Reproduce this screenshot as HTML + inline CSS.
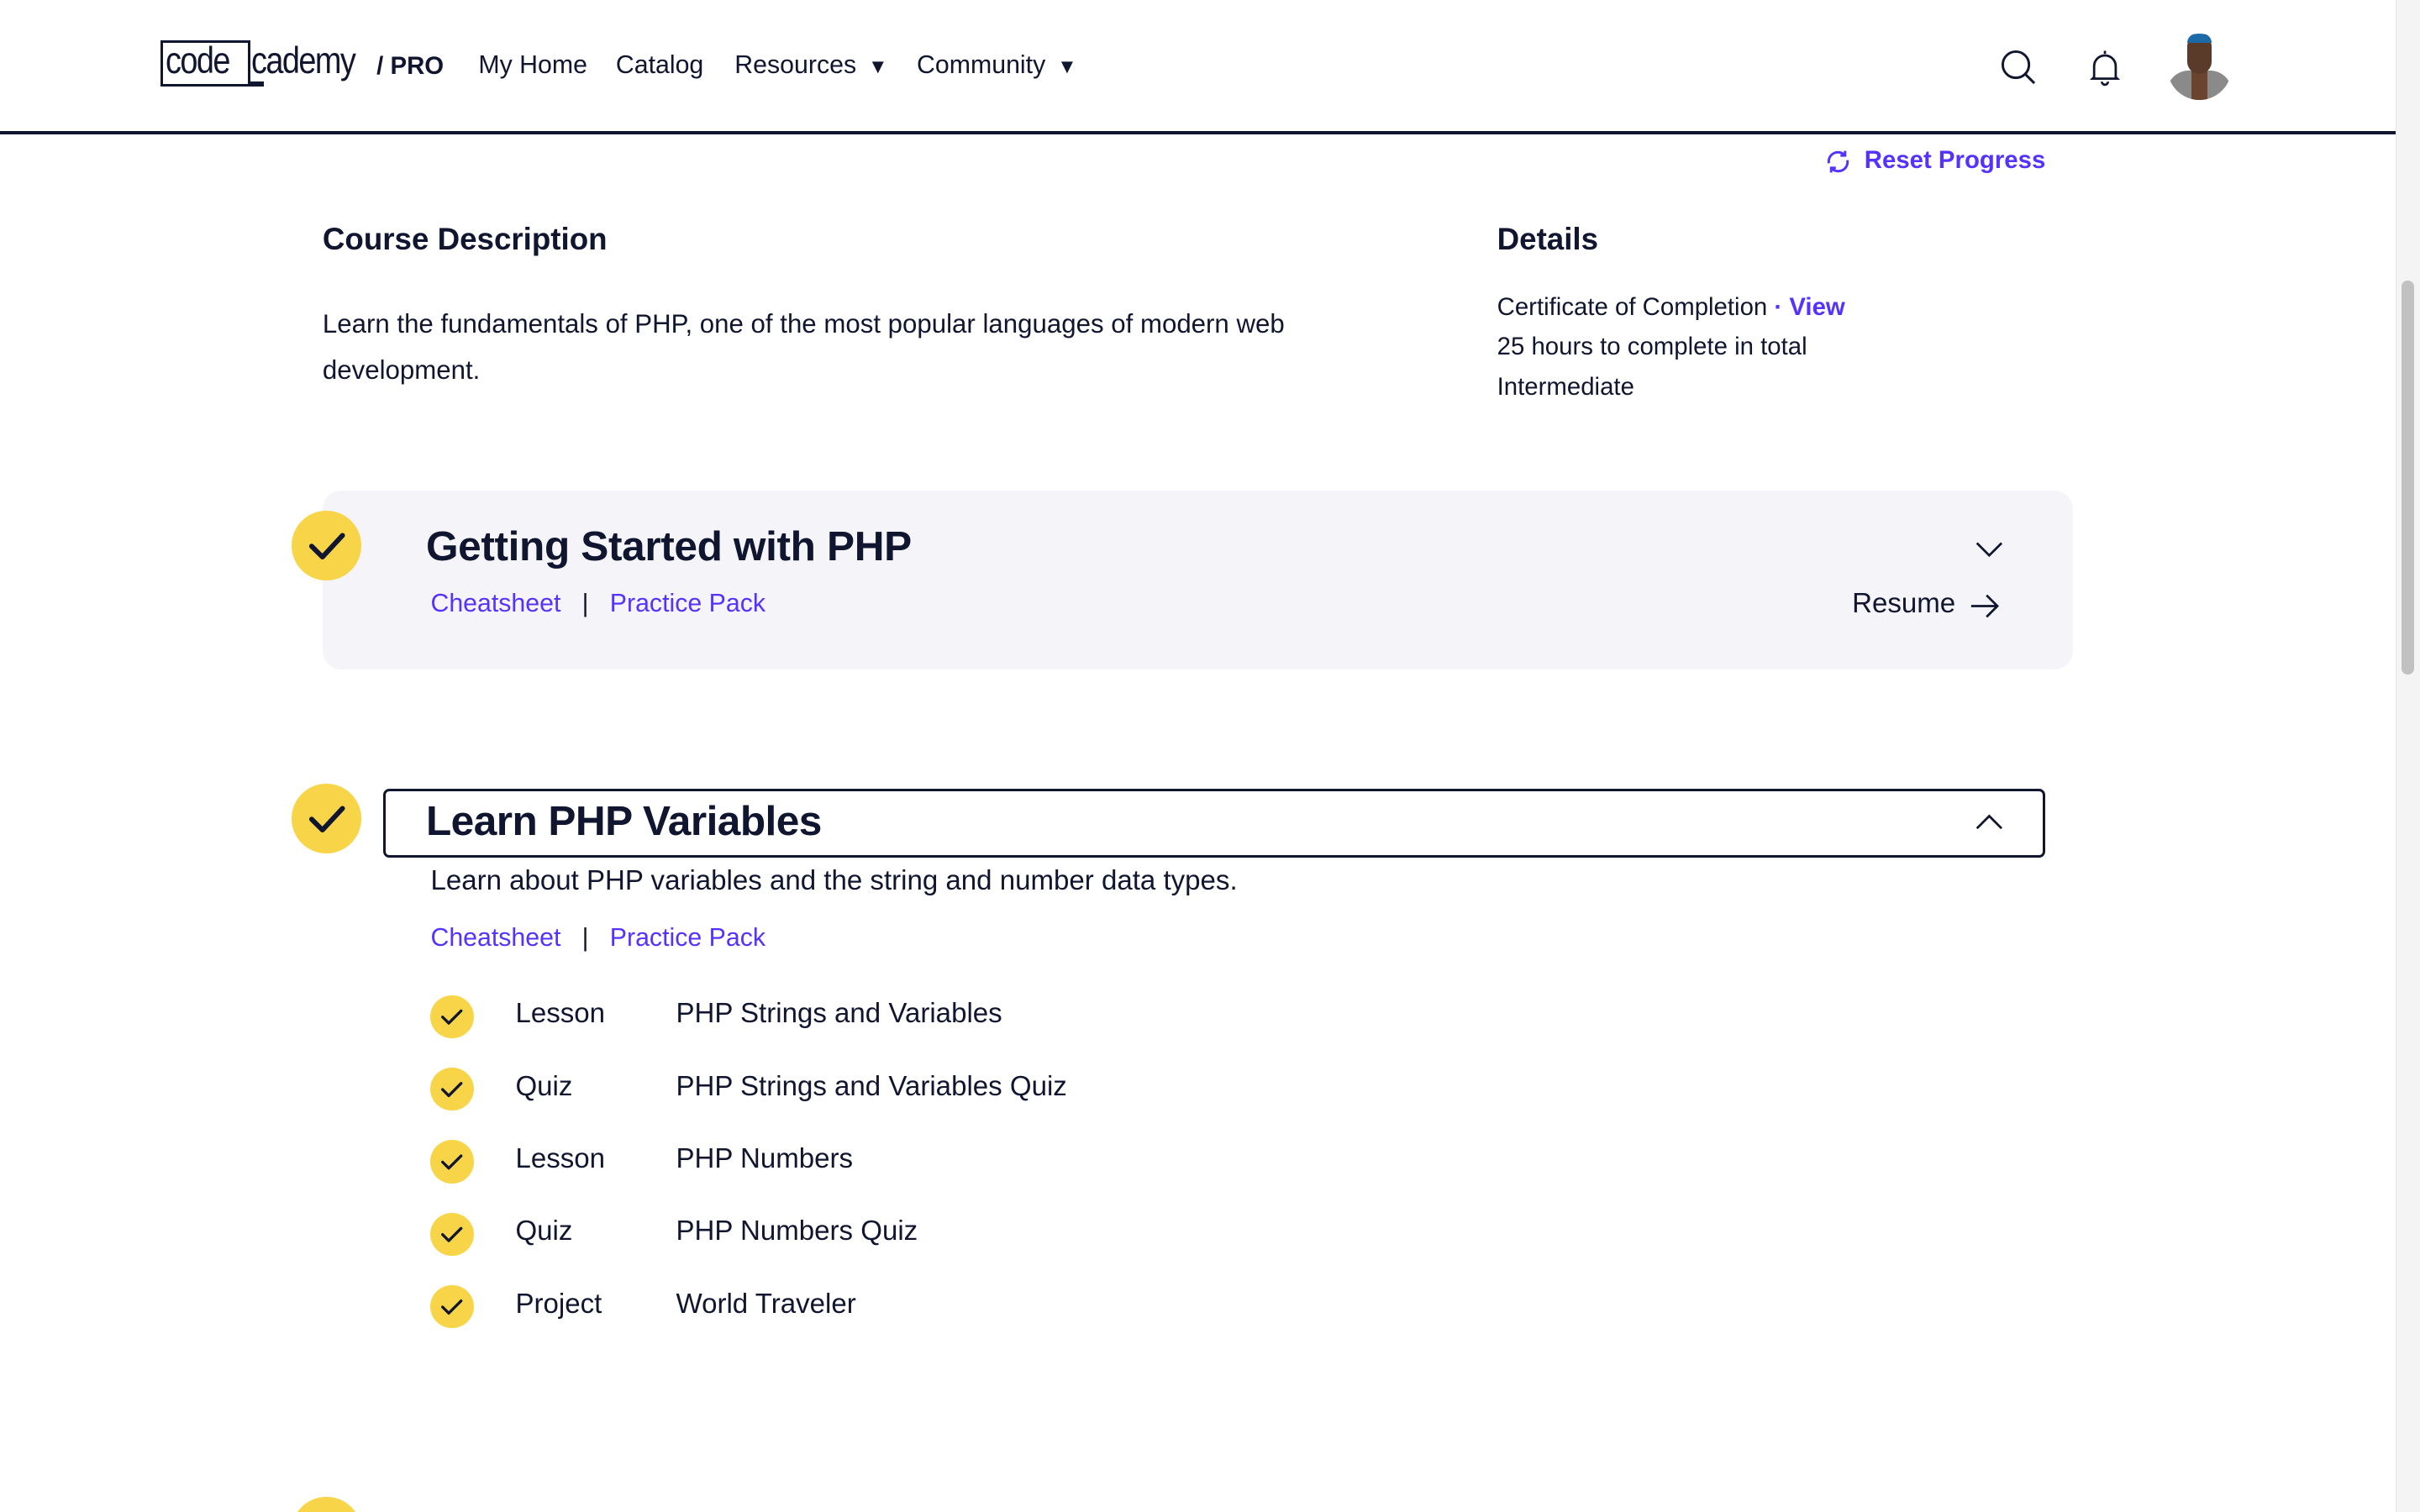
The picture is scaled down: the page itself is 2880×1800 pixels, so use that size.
<!DOCTYPE html>
<html><head><meta charset="utf-8"><style>
html,body{margin:0;padding:0;background:#fff;overflow:hidden}
#w{position:relative;width:1568px;height:980px;zoom:1.836735;font-family:"Liberation Sans",sans-serif;color:#10162f}
.a{position:absolute;white-space:nowrap}
.p{color:#5533ff}
.chk{position:absolute;border-radius:50%;background:#f8d448}
.sm{width:28px;height:28px;left:279px}
</style></head><body><div id="w">
<!-- header -->
<div class="a" style="left:104px;top:26px;height:30px;border:2px solid #10162f;box-sizing:border-box;width:58px"></div>
<div class="a" style="left:107px;top:26px;font-size:24px;letter-spacing:-1px;transform:scaleX(0.86);transform-origin:left">code</div>
<div class="a" style="left:163px;top:26px;font-size:24px;letter-spacing:-1px;transform:scaleX(0.86);transform-origin:left">cademy</div>
<div class="a" style="left:162px;top:53px;width:9px;height:3px;background:#10162f"></div>
<div class="a" style="left:244px;top:34px;font-size:16px;font-weight:bold">/ PRO</div>
<div class="a" style="left:310px;top:33px;font-size:16.5px">My Home</div>
<div class="a" style="left:399px;top:33px;font-size:16.5px">Catalog</div>
<div class="a" style="left:476px;top:33px;font-size:16.5px">Resources <span style="font-size:13px;margin-left:3px">▼</span></div>
<div class="a" style="left:594px;top:33px;font-size:16.5px">Community <span style="font-size:13px;margin-left:3px">▼</span></div>
<svg class="a" style="left:1294px;top:30px" width="28" height="28" viewBox="0 0 28 28"><circle cx="12" cy="12" r="8.5" fill="none" stroke="#10162f" stroke-width="1.6"/><path d="M18 18l6 6" stroke="#10162f" stroke-width="1.6"/></svg>
<svg class="a" style="left:1352px;top:30px" width="24" height="28" viewBox="0 0 24 28"><path d="M12 3v2M5 20V13a7 7 0 0 1 14 0v7l1 1H4z" fill="none" stroke="#10162f" stroke-width="1.5"/><path d="M10 23a2 2 0 0 0 4 0" fill="none" stroke="#10162f" stroke-width="1.5"/></svg>
<div class="a" style="left:1404px;top:22px;width:42px;height:43px;border-radius:50%;overflow:hidden;background:#fff">
<div class="a" style="left:0;top:24px;width:42px;height:22px;background:#8a8a8a;border-radius:14px 14px 0 0"></div>
<div class="a" style="left:16px;top:24px;width:10px;height:20px;background:#6b4430"></div>
<div class="a" style="left:13px;top:2px;width:16px;height:24px;background:#5a3a28;border-radius:6px 6px 8px 8px"></div>
<div class="a" style="left:13px;top:0;width:16px;height:6px;background:#1d6aa8;border-radius:6px 6px 0 0"></div>
</div>
<div class="a" style="left:0;top:85px;width:1552px;height:2px;background:#10162f"></div>
<div class="a" style="left:1552px;top:0;width:16px;height:980px;background:#f4f4f4;border-left:1px solid #e6e6e6"></div>
<div class="a" style="left:1556px;top:182px;width:8px;height:255px;background:#c1c1c1;border-radius:4px"></div>
<!-- reset -->
<svg class="a" style="left:1182px;top:96px" width="18" height="18" viewBox="0 0 18 18"><path d="M3 10a6 6 0 0 1 10-5.5M15 8a6 6 0 0 1-10 5.5" fill="none" stroke="#5533ff" stroke-width="1.6"/><path d="M13.5 2v3h-3M4.5 16v-3h3" fill="none" stroke="#5533ff" stroke-width="1.6"/></svg>
<div class="a p" style="left:1208px;top:95px;font-size:16px;font-weight:bold">Reset Progress</div>
<!-- description -->
<div class="a" style="left:209px;top:144px;font-size:20px;font-weight:bold">Course Description</div>
<div class="a" style="left:209px;top:195px;font-size:17px;line-height:30px;white-space:normal;width:670px">Learn the fundamentals of PHP, one of the most popular languages of modern web development.</div>
<div class="a" style="left:970px;top:144px;font-size:20px;font-weight:bold">Details</div>
<div class="a" style="left:970px;top:186px;font-size:16px;line-height:26px">Certificate of Completion <span class="p" style="font-weight:bold">· View</span><br>25 hours to complete in total<br>Intermediate</div>
<!-- module 1 -->
<div class="a" style="left:209px;top:318px;width:1134px;height:116px;background:#f5f5f9;border-radius:12px"></div>
<div class="chk" style="left:189px;top:331px;width:45px;height:45px"></div>
<svg class="a" style="left:189px;top:331px" width="45" height="45" viewBox="0 0 45 45"><path d="M13 23l7 7 13-14" fill="none" stroke="#10162f" stroke-width="3.2" stroke-linecap="round" stroke-linejoin="round"/></svg>
<div class="a" style="left:276px;top:338px;font-size:27px;font-weight:bold;letter-spacing:-0.2px">Getting Started with PHP</div>
<div class="a" style="left:279px;top:382px;font-size:16.5px"><span class="p">Cheatsheet</span>&nbsp;&nbsp;&nbsp;|&nbsp;&nbsp;&nbsp;<span class="p">Practice Pack</span></div>
<svg class="a" style="left:1279px;top:349px" width="20" height="14" viewBox="0 0 20 14"><path d="M2 3l8 8 8-8" fill="none" stroke="#10162f" stroke-width="1.5"/></svg>
<div class="a" style="left:1200px;top:381px;font-size:18px">Resume</div>
<svg class="a" style="left:1276px;top:384px" width="20" height="18" viewBox="0 0 20 18"><path d="M1 9h17M11 2l7 7-7 7" fill="none" stroke="#10162f" stroke-width="1.5"/></svg>
<!-- module 2 -->
<div class="chk" style="left:189px;top:508px;width:45px;height:45px"></div>
<svg class="a" style="left:189px;top:508px" width="45" height="45" viewBox="0 0 45 45"><path d="M13 23l7 7 13-14" fill="none" stroke="#10162f" stroke-width="3.2" stroke-linecap="round" stroke-linejoin="round"/></svg>
<div class="a" style="left:248px;top:511px;width:1077px;height:45px;border:2px solid #10162f;border-radius:4px;box-sizing:border-box"></div>
<div class="a" style="left:276px;top:516px;font-size:27px;font-weight:bold;letter-spacing:-0.3px">Learn PHP Variables</div>
<svg class="a" style="left:1279px;top:526px" width="20" height="14" viewBox="0 0 20 14"><path d="M2 11l8-8 8 8" fill="none" stroke="#10162f" stroke-width="1.5"/></svg>
<div class="a" style="left:279px;top:561px;font-size:18px">Learn about PHP variables and the string and number data types.</div>
<div class="a" style="left:279px;top:599px;font-size:16.5px"><span class="p">Cheatsheet</span>&nbsp;&nbsp;&nbsp;|&nbsp;&nbsp;&nbsp;<span class="p">Practice Pack</span></div>
<!-- items -->
<div class="chk sm" style="top:645px"></div><div class="chk sm" style="top:692px"></div><div class="chk sm" style="top:739px"></div><div class="chk sm" style="top:786px"></div><div class="chk sm" style="top:833px"></div>
<svg class="a" style="left:279px;top:645px" width="28" height="220" viewBox="0 0 28 220"><g fill="none" stroke="#10162f" stroke-width="1.8" stroke-linecap="round" stroke-linejoin="round"><path d="M8 14l4 4 8-8"/><path d="M8 61l4 4 8-8"/><path d="M8 108l4 4 8-8"/><path d="M8 155l4 4 8-8"/><path d="M8 202l4 4 8-8"/></g></svg>
<div class="a" style="left:334px;top:634px;font-size:18px;line-height:47px">Lesson<br>Quiz<br>Lesson<br>Quiz<br>Project</div>
<div class="a" style="left:438px;top:634px;font-size:18px;line-height:47px">PHP Strings and Variables<br>PHP Strings and Variables Quiz<br>PHP Numbers<br>PHP Numbers Quiz<br>World Traveler</div>
<div class="chk" style="left:189px;top:970px;width:45px;height:45px"></div>
</div></body></html>
